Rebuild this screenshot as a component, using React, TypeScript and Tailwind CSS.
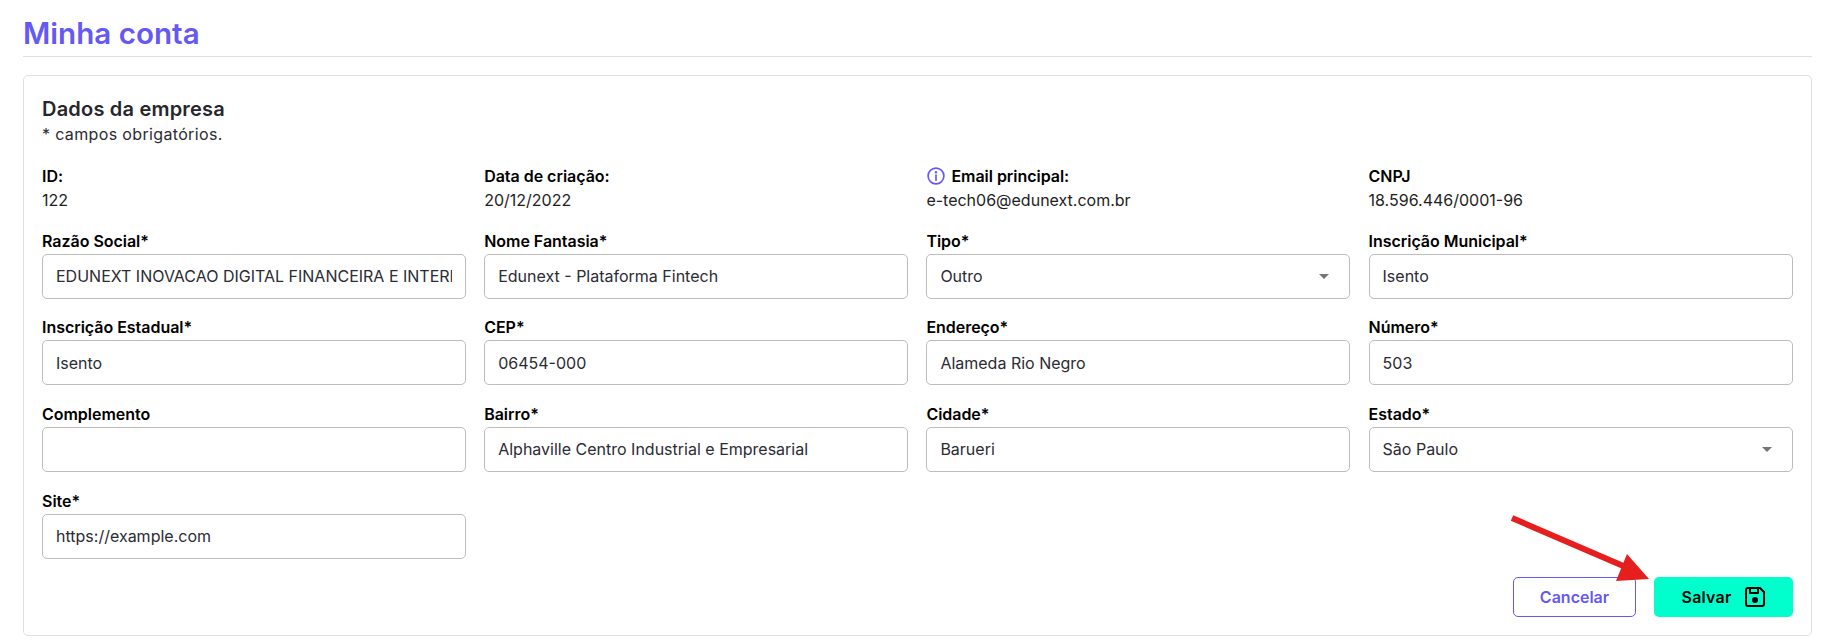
import React from "react";

const Label = ({ children }: { children: React.ReactNode }) => (
  <div className="h-[21px] text-[16px] leading-[21px] font-semibold tracking-[-0.03px] text-black">{children}</div>
);

const Info = ({ label, value, icon }: { label: string; value: string; icon?: boolean }) => (
  <div className="flex flex-col">
    <div className="flex items-center gap-[5px] h-[21px] text-[16px] font-semibold tracking-[-0.03px] text-black">
      {icon && (
        <svg width="20" height="20" viewBox="0 0 24 24" fill="none" stroke="#6558f5" strokeWidth="2" strokeLinecap="round">
          <circle cx="12" cy="12" r="9.5" />
          <path d="M12 11v6" />
          <circle cx="12" cy="7.5" r="0.6" fill="#6558f5" />
        </svg>
      )}
      <span>{label}</span>
    </div>
    <div className="mt-[2px] h-[24px] text-[16px] leading-[24px] text-[#1d1d22]">{value}</div>
  </div>
);

const Field = ({ label, value = "" }: { label: string; value?: string }) => (
  <div className="flex flex-col">
    <Label>{label}</Label>
    <input
      readOnly
      value={value}
      className="mt-[2px] h-[45px] w-full rounded-[5px] border border-[#bdbdbd] bg-white px-[13px] text-[16px] text-[#2b2b33] outline-none"
    />
  </div>
);

const SelectField = ({ label, value }: { label: string; value: string }) => (
  <div className="flex flex-col">
    <Label>{label}</Label>
    <div className="mt-[2px] flex h-[45px] w-full items-center justify-between rounded-[5px] border border-[#bdbdbd] bg-white pl-[13px] pr-[20px] text-[16px] text-[#2b2b33]">
      <span>{value}</span>
      <svg width="10" height="5" viewBox="0 0 10 5"><path d="M0 0h10L5 5z" fill="#757575" /></svg>
    </div>
  </div>
);

export default function App() {
  return (
    <div className="relative h-[643px] w-[1831px] overflow-hidden bg-white pl-[23px] pr-[19px] font-['Inter',sans-serif]">
      <div className="flex h-[57px] items-end border-b border-[#e0e0e0] pb-[3px]">
        <h1 className="text-[29.6px] leading-[40px] font-semibold text-[#6558f5]">Minha conta</h1>
      </div>
      <div className="mt-[18px] h-[561px] rounded-[5px] border border-[#e0e0e0] px-[18px] pt-[19px]">
        <h2 className="text-[20px] leading-[28px] font-semibold tracking-[0.2px] text-[#26262c]">Dados da empresa</h2>
        <p className="text-[16px] leading-[22px] tracking-[0.35px] text-[#2b2b33]">* campos obrigatórios.</p>
        <div className="mt-[20px] grid grid-cols-[423.6px_423.6px_423.6px_424.2px] gap-x-[18.6px] gap-y-[18.67px]">
          <Info label="ID:" value="122" />
          <Info label="Data de criação:" value="20/12/2022" />
          <Info label="Email principal:" value="e-tech06@edunext.com.br" icon />
          <Info label="CNPJ" value="18.596.446/0001-96" />

          <Field label="Razão Social*" value="EDUNEXT INOVACAO DIGITAL FINANCEIRA E INTERMEDIACAO LTDA" />
          <Field label="Nome Fantasia*" value="Edunext - Plataforma Fintech" />
          <SelectField label="Tipo*" value="Outro" />
          <Field label="Inscrição Municipal*" value="Isento" />

          <Field label="Inscrição Estadual*" value="Isento" />
          <Field label="CEP*" value="06454-000" />
          <Field label="Endereço*" value="Alameda Rio Negro" />
          <Field label="Número*" value="503" />

          <Field label="Complemento" />
          <Field label="Bairro*" value="Alphaville Centro Industrial e Empresarial" />
          <Field label="Cidade*" value="Barueri" />
          <SelectField label="Estado*" value="São Paulo" />

          <Field label="Site*" value="https://example.com" />
        </div>
        <div className="mt-[18.33px] flex justify-end gap-[18px]">
          <button className="h-[40px] w-[123px] rounded-[5px] border border-[#6558f5] bg-white text-[16px] font-semibold text-[#6558f5]">
            Cancelar
          </button>
          <button className="flex h-[40px] w-[139px] items-center justify-center gap-[12px] rounded-[5px] bg-[#00ffcc] pl-[2px] text-[16px] font-semibold tracking-[0.2px] text-black">
            <span>Salvar</span>
            <svg width="24" height="24" viewBox="0 0 24 24" fill="none" stroke="#000" strokeWidth="2" strokeLinejoin="round">
              <path d="M3 5a2 2 0 0 1 2-2h12l4 4v12a2 2 0 0 1-2 2H5a2 2 0 0 1-2-2z" />
              <path d="M7 3v5h8V3" />
              <circle cx="12" cy="15" r="2" fill="#000" />
            </svg>
          </button>
        </div>
      </div>
      <svg className="absolute left-[1505px] top-[510px]" width="150" height="80" viewBox="1505 510 150 80">
        <path d="M1512 518L1628 568" stroke="#e61e1e" strokeWidth="6" fill="none" />
        <path d="M1627 554L1649 579L1616 581z" fill="#e61e1e" />
      </svg>
    </div>
  );
}
